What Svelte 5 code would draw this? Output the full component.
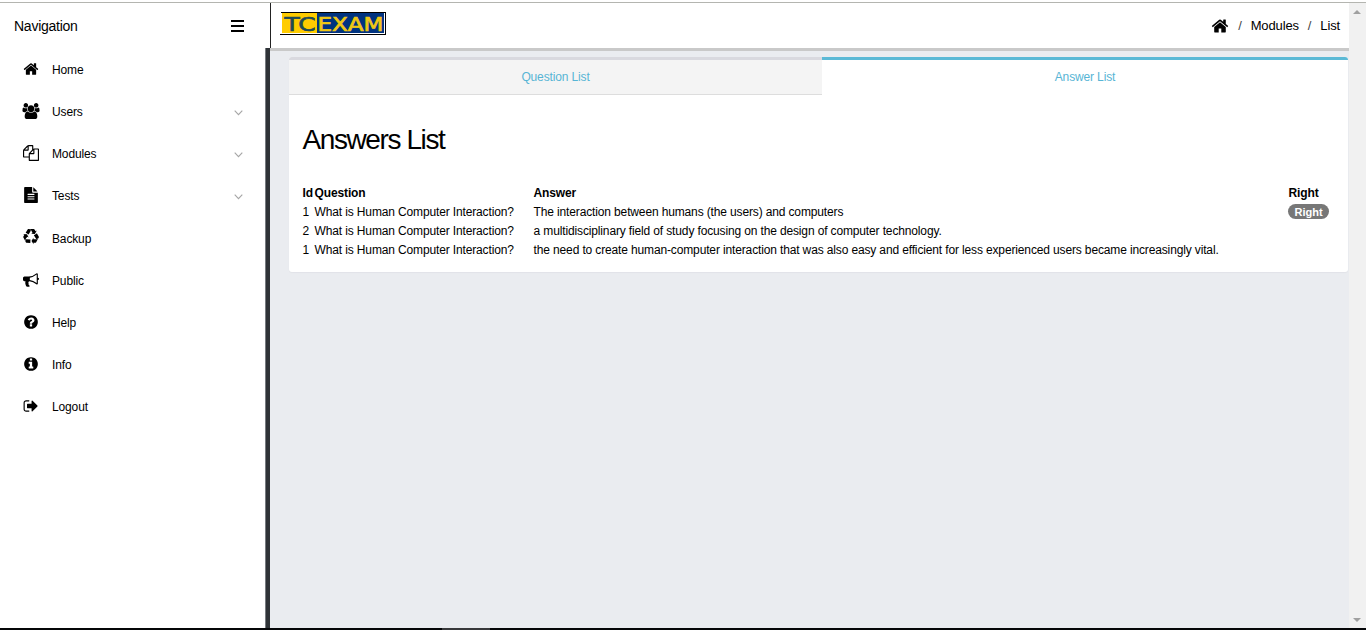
<script>
  const icons = {
    home: 'M1472 992v480q0 26-19 45t-45 19h-384v-384h-256v384h-384q-26 0-45-19t-19-45v-480q0-1 .5-3t.5-3l575-474 575 474q1 2 1 6zm223-69l-62 74q-8 9-21 11h-3q-13 0-21-7l-692-577-692 577q-12 8-24 7-13-2-21-11l-62-74q-8-10-7-23.5t11-21.5l719-599q32-26 76-26t76 26l244 204v-195q0-14 9-23t23-9h192q14 0 23 9t9 23v408l219 182q10 8 11 21.5t-7 23.5z',
    users: 'M529 896q-162 5-265 128h-134q-82 0-138-40.5t-56-118.5q0-353 124-353 6 0 43.5 21t97.5 42.5 119 21.5q67 0 133-23-5 37-5 66 0 139 81 256zm1071 637q0 120-73 189.5t-194 69.5h-874q-121 0-194-69.5t-73-189.5q0-53 3.5-103.5t14-109 26.5-108.5 43-97.5 62-81 85.5-53.5 111.5-20q10 0 43 21.5t73 48 107 48 135 21.5 135-21.5 107-48 73-48 43-21.5q61 0 111.5 20t85.5 53.5 62 81 43 97.5 26.5 108.5 14 109 3.5 103.5zm-1024-1277q0 106-75 181t-181 75-181-75-75-181 75-181 181-75 181 75 75 181zm704 384q0 159-112.5 271.5t-271.5 112.5-271.5-112.5-112.5-271.5 112.5-271.5 271.5-112.5 271.5 112.5 112.5 271.5zm576 225q0 78-56 118.5t-138 40.5h-134q-103-123-265-128 81-117 81-256 0-29-5-66 66 23 133 23 59 0 119-21.5t97.5-42.5 43.5-21q124 0 124 353zm-128-609q0 106-75 181t-181 75-181-75-75-181 75-181 181-75 181 75 75 181z',
    files: 'M1696 384q40 0 68 28t28 68v1216q0 40-28 68t-68 28h-960q-40 0-68-28t-28-68v-288h-544q-40 0-68-28t-28-68v-672q0-40 20-88t48-76l408-408q28-28 76-48t88-20h416q40 0 68 28t28 68v328q68-40 128-40h416zm-544 213l-299 299h299v-299zm-640-384l-299 299h299v-299zm196 647l316-316v-416h-384v416q0 40-28 68t-68 28h-416v640h512v-256q0-40 20-88t48-76zm956 804v-1152h-384v416q0 40-28 68t-68 28h-416v640h896z',
    file: 'M1596 476q14 14 28 36h-472v-472q22 14 36 28zm-476 164h544v1056q0 40-28 68t-68 28h-1344q-40 0-68-28t-28-68v-1600q0-40 28-68t68-28h800v544q0 40 28 68t68 28zm160 736v-64q0-14-9-23t-23-9h-704q-14 0-23 9t-9 23v64q0 14 9 23t23 9h704q14 0 23-9t9-23zm0-256v-64q0-14-9-23t-23-9h-704q-14 0-23 9t-9 23v64q0 14 9 23t23 9h704q14 0 23-9t9-23zm0-256v-64q0-14-9-23t-23-9h-704q-14 0-23 9t-9 23v64q0 14 9 23t23 9h704q14 0 23-9t9-23z',
    recycle: 'M836 1169l-15 368-2 22-420-29q-36-3-67-31.5t-47-65.5q-11-27-14.5-55t4-65 12-55 21.5-64 19-53q78 12 509 28zm-387-586l180 379-147-92q-63 72-111.5 144.5t-72.5 125-39.5 94.5-18.5 63l-4 21-190-357q-17-26-18-56t6-47l8-18q35-63 114-188l-140-86zm1231 517l-188 359q-12 29-36.5 46.5t-43.5 20.5l-18 4q-71 7-219 12l8 164-230-367 211-362 7 173q170 16 283 5t170-33zm-785-924q-47 63-265 435l-317-187-19-12 225-356q20-31 60-45t80-10q24 2 48.5 12t42 21 41.5 33 36 34.5 36 39.5 32 35zm655 307l212 363q18 37 12.5 76t-27.5 74q-13 20-33 37t-38 28-48.5 22-47 16-51.5 14-46 12q-34-72-265-436l313-195zm-143-226l142-83-220 373-419-20 151-86q-34-89-75-166t-75.5-123.5-64.5-80-47-46.5l-17-13 405 1q31-3 58 10.5t39 28.5l11 15q39 61 112 190z',
    bullhorn: 'M1664 640q53 0 90.5 37.5t37.5 90.5-37.5 90.5-90.5 37.5v384q0 52-38 90t-90 38q-417-347-812-380-58 19-91 66t-31 100.5 40 92.5q-20 33-23 65.5t6 58 33.5 55 48 50 61.5 50.5q-29 58-111.5 83t-168.5 11.5-132-55.5q-7-23-29.5-87.5t-32-94.5-23-89-15-101 3.5-98 22-110.5h-122q-66 0-113-47t-47-113v-192q0-66 47-113t113-47h480q435 0 896-384 52 0 90 38t38 90v384zm-128 604v-954q-394 302-768 343v270q377 42 768 341z',
    help: 'M1024 1376v-192q0-14-9-23t-23-9h-192q-14 0-23 9t-9 23v192q0 14 9 23t23 9h192q14 0 23-9t9-23zm256-672q0-88-55.5-163t-138.5-116-170-41q-243 0-371 213-15 24 8 42l132 100q7 6 19 6 16 0 25-12 53-68 86-92 34-24 86-24 48 0 85.5 26t37.5 59q0 38-20 61t-68 45q-63 28-115.5 86.5t-52.5 125.5v36q0 14 9 23t23 9h192q14 0 23-9t9-23q0-19 21.5-49.5t54.5-49.5q32-18 49-28.5t46-35 44.5-48 28-60.5 12.5-81zm384 192q0 209-103 385.5t-279.5 279.5-385.5 103-385.5-103-279.5-279.5-103-385.5 103-385.5 279.5-279.5 385.5-103 385.5 103 279.5 279.5 103 385.5z',
    info: 'M1152 1376v-160q0-14-9-23t-23-9h-96v-512q0-14-9-23t-23-9h-320q-14 0-23 9t-9 23v160q0 14 9 23t23 9h96v320h-96q-14 0-23 9t-9 23v160q0 14 9 23t23 9h448q14 0 23-9t9-23zm-128-896v-160q0-14-9-23t-23-9h-192q-14 0-23 9t-9 23v160q0 14 9 23t23 9h192q14 0 23-9t9-23zm640 416q0 209-103 385.5t-279.5 279.5-385.5 103-385.5-103-279.5-279.5-103-385.5 103-385.5 279.5-279.5 385.5-103 385.5 103 279.5 279.5 103 385.5z',
    logout: 'M704 1440q0 4 1 20t.5 26.5-3 23.5-10 19.5-20.5 6.5h-320q-119 0-203.5-84.5t-84.5-203.5v-704q0-119 84.5-203.5t203.5-84.5h320q13 0 22.5 9.5t9.5 22.5q0 4 1 20t.5 26.5-3 23.5-10 19.5-20.5 6.5h-320q-66 0-113 47t-47 113v704q0 66 47 113t113 47h312l11.5 1 11.5 3 8 5.5 7 9 2 13.5zm928-544q0 26-19 45l-544 544q-19 19-45 19t-45-19-19-45v-288h-448q-26 0-45-19t-19-45v-384q0-26 19-45t45-19h448v-288q0-26 19-45t45-19 45 19l544 544q19 19 19 45z'
  };

  const nav = [
    { label: 'Home', icon: 'home', size: 16 },
    { label: 'Users', icon: 'users', size: 16, more: true },
    { label: 'Modules', icon: 'files', size: 16, more: true },
    { label: 'Tests', icon: 'file', size: 16, more: true },
    { label: 'Backup', icon: 'recycle', size: 16 },
    { label: 'Public', icon: 'bullhorn', size: 16 },
    { label: 'Help', icon: 'help', size: 16 },
    { label: 'Info', icon: 'info', size: 16 },
    { label: 'Logout', icon: 'logout', size: 16 }
  ];

  const rows = [
    { id: 1, answer: 'The interaction between humans (the users) and computers', right: true },
    { id: 2, answer: 'a multidisciplinary field of study focusing on the design of computer technology.' },
    { id: 1, answer: 'the need to create human-computer interaction that was also easy and efficient for less experienced users became increasingly vital.' }
  ];
</script>

{#snippet glyph(name, size)}
  <svg class="glyph" width={size} height={size} viewBox="0 0 1792 1792" aria-hidden="true"><path d={icons[name]} /></svg>
{/snippet}

<div class="page">
  <aside>
    <div class="brand">
      <span>Navigation</span>
      <svg width="13" height="12" viewBox="0 0 13 12" aria-hidden="true"><path d="M0 0h13v2H0zM0 5h13v2H0zM0 10h13v2H0z" /></svg>
    </div>
    <nav>
      {#each nav as item}
        <a href="#{item.label}">
          <span class="ico">{@render glyph(item.icon, item.size)}</span>
          <span class="label">{item.label}</span>
          {#if item.more}
            <svg class="chev" width="9" height="6" viewBox="0 0 9 6" aria-hidden="true"><path d="M.7.7 4.5 4.7 8.3.7" /></svg>
          {/if}
        </a>
      {/each}
    </nav>
  </aside>
  <div class="divider"><i></i></div>

  <div class="content">
    <header>
      <svg class="logo" width="106" height="23" viewBox="0 0 106 23">
        <path fill="#000" d="M1 0h105v23H0V22H1z" />
        <path fill="#fff" d="M1 1h104v21H1z" />
        <path fill="#ffcc00" d="M2 1h35v20H2z" />
        <path fill="#003380" d="M37 1h67v20H37z" />
        <text x="4.5" y="18.5" fill="#1f4a55" stroke="#1f4a55" textLength="31" lengthAdjust="spacingAndGlyphs">TC</text>
        <text x="37.5" y="18.5" fill="#f0c814" stroke="#f0c814" textLength="66" lengthAdjust="spacingAndGlyphs">EXAM</text>
      </svg>
      <div class="crumbs">
        {@render glyph('home', 18)}
        <span class="sep">/</span>
        <span>Modules</span>
        <span class="sep">/</span>
        <span>List</span>
      </div>
    </header>
    <main>
      <section class="card">
        <div class="tabs">
          <a class="tab" href="#questions">Question List</a>
          <a class="tab active" href="#answers">Answer List</a>
        </div>
        <h1>Answers List</h1>
        <div class="table">
          <b>Id</b><b>Question</b><b>Answer</b><b>Right</b>
          {#each rows as row}
            <span>{row.id}</span>
            <span>What is Human Computer Interaction?</span>
            <span>{row.answer}</span>
            <span>{#if row.right}<em>Right</em>{/if}</span>
          {/each}
        </div>
      </section>
    </main>
  </div>

  <div class="scroll">
    <svg width="8" height="4" viewBox="0 0 8 4" aria-hidden="true"><path d="M4 0 8 4H0z" /></svg>
    <svg width="8" height="4" viewBox="0 0 8 4" aria-hidden="true"><path d="M0 0h8L4 4z" /></svg>
  </div>
</div>
<div class="bottom"><i></i></div>

<style>
  :global(body) { background: #fff; overflow: hidden; }
  .page {
    box-sizing: border-box;
    display: flex;
    height: 628px;
    padding-top: 2px;
    font: 12px/19px "Liberation Sans", Arial, sans-serif;
    letter-spacing: -0.14px;
    color: #000;
    background: linear-gradient(#b4b5b0, #b4b5b0) 0 2px / 100% 1px no-repeat, #fff;
  }
  svg { display: block; flex: none; }
  a { color: inherit; text-decoration: none; }
  aside { width: 265px; }
  .brand {
    display: flex;
    align-items: center;
    justify-content: space-between;
    height: 46px;
    padding: 1px 21px 0 14px;
    box-sizing: border-box;
    font-size: 14px;
    letter-spacing: -0.25px;
  }
  .brand span { padding-top: 2px; }
  nav a { display: flex; align-items: center; height: 42.12px; padding: 0 22px 0 23px; }
  .ico { width: 16px; display: flex; justify-content: center; margin-right: 13px; }
  .glyph { overflow: visible; }
  .label { padding-top: 3.2px; }
  .chev { margin: 3px 0 0 auto; fill: none; stroke: #a6a6a6; stroke-width: 1.1; }
  .divider { width: 5px; margin-top: 46px; background: #2f3337; display: flex; }
  .divider i { width: 1px; background: #777b80; }
  .content { width: 1079px; display: flex; flex-direction: column; }
  header {
    display: flex;
    align-items: center;
    justify-content: space-between;
    height: 45px;
    margin-top: 1px;
    padding: 0 9px 0 9px;
    box-sizing: border-box;
    border-left: 1px solid #222;
    background: #fff;
  }
  .logo { margin-top: -4px; }
  .logo text { font: 400 20px "DejaVu Sans", sans-serif; letter-spacing: 0; stroke-width: 0.7; }
  .crumbs { display: flex; align-items: center; font-size: 13px; }
  .sep { margin: -1px 9px 0 9px; color: #444; }
  .crumbs .glyph + .sep { margin-left: 9px; }
  main {
    flex: 1;
    border-top: 3px solid #c9c9c9;
    padding: 6px 1px 0 19px;
    background: #eaecf0;
  }
  .card { height: 215px; background: #fff; border-radius: 3px; overflow: hidden; box-shadow: 0 1px 1px #e2e3e8; }
  .tabs { display: flex; height: 38px; color: #57b5d5; text-align: center; }
  .tab { box-sizing: border-box; width: 533px; border-top: 3px solid #d9d9df; border-bottom: 1px solid #ddd; padding-top: 8px; background: #f4f4f4; }
  .tab.active { width: 526px; border-top-color: #5bb9d6; border-bottom: 0; background: #fff; }
  h1 { margin: 28px 14px 0 13.5px; font-size: 28px; line-height: 34px; font-weight: 400; letter-spacing: -1.4px; }
  .table { display: grid; grid-template-columns: 12px 219px 755px 60px; grid-auto-rows: 19px; margin: 27px 0 0 13.6px; white-space: nowrap; }
  em {
    display: block;
    width: 41px;
    height: 15px;
    margin-top: 1px;
    margin-left: -0.6px;
    border-radius: 8px;
    background: #777;
    color: #fff;
    font: 700 11px/16px "Liberation Sans", Arial, sans-serif;
    letter-spacing: 0;
    text-align: center;
  }
  .scroll {
    width: 17px;
    box-sizing: border-box;
    margin-top: 1px;
    padding: 7px 0 6px 4px;
    display: flex;
    flex-direction: column;
    justify-content: space-between;
    background: #f1f1f1;
    fill: #a0a0a0;
  }
  .bottom { height: 2px; background: #050608; padding-left: 442px; }
  .bottom i { display: block; width: 48px; height: 2px; background: #38393b; }
</style>
